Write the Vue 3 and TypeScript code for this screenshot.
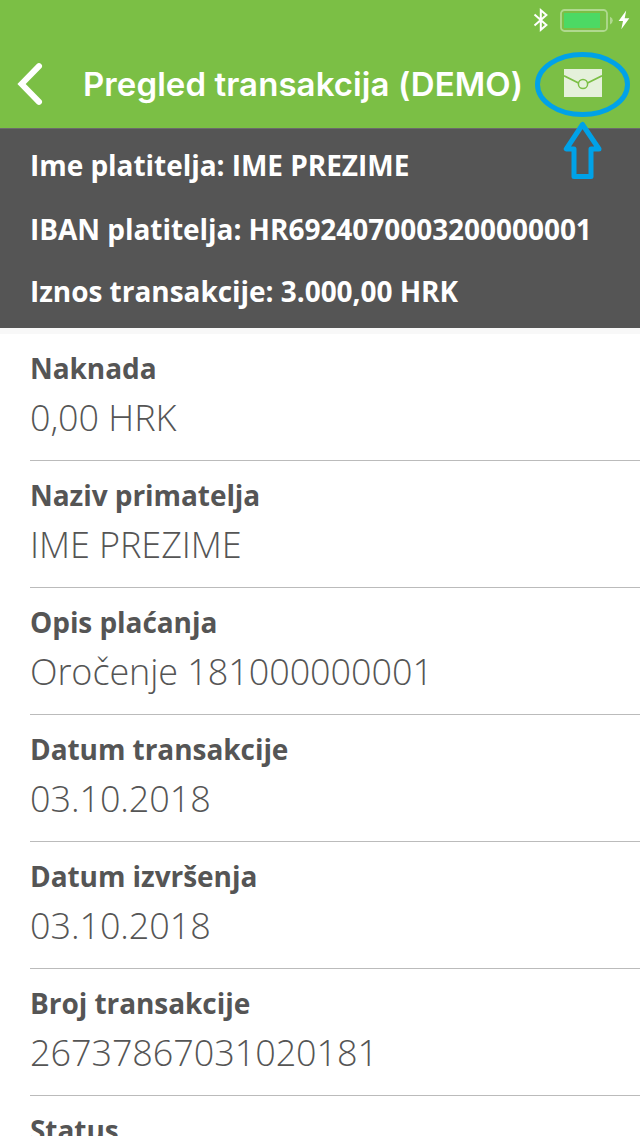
<script setup lang="ts">
interface Detail {
  label: string
  value: string
}

const summary: string[] = [
  'Ime platitelja: IME PREZIME',
  'IBAN platitelja: HR6924070003200000001',
  'Iznos transakcije: 3.000,00 HRK',
]

const details: Detail[] = [
  { label: 'Naknada', value: '0,00 HRK' },
  { label: 'Naziv primatelja', value: 'IME PREZIME' },
  { label: 'Opis plaćanja', value: 'Oročenje 181000000001' },
  { label: 'Datum transakcije', value: '03.10.2018' },
  { label: 'Datum izvršenja', value: '03.10.2018' },
  { label: 'Broj transakcije', value: '26737867031020181' },
  { label: 'Status', value: '' },
]
</script>

<template>
  <div class="screen">
    <header class="header">
      <div class="status-bar">
        <svg class="bluetooth" width="16" height="24" viewBox="0 0 16 24">
          <path d="M1.5 6.5 L13.4 17 L7.8 21.8 V2.2 L13.4 7 L1.5 17.5" fill="none" stroke="#fff" stroke-width="2" />
        </svg>
        <svg class="battery" width="54" height="24" viewBox="0 0 54 24">
          <rect x="1" y="1" width="46" height="21" rx="3.5" fill="none" stroke="#b0d98f" stroke-width="1.8" />
          <rect x="4" y="4" width="36" height="15" fill="#4cd964" />
          <path d="M50 7.8 Q52.8 9 52.8 11.6 Q52.8 14.2 50 15.4 Z" fill="#b0d98f" />
        </svg>
        <svg class="bolt" width="12" height="20" viewBox="0 0 12 20">
          <path d="M8.2 0.5 L0.6 11 H5 L3.3 19.3 L11.3 8.2 H6.7 Z" fill="#fff" />
        </svg>
      </div>
      <nav class="nav">
        <svg class="back" width="28" height="46" viewBox="0 0 28 46">
          <path d="M23 5.2 L5.6 23 L23 40.8" fill="none" stroke="#fff" stroke-width="6" stroke-linecap="round" stroke-linejoin="miter" />
        </svg>
        <h1 class="title">Pregled transakcija (DEMO)</h1>
        <svg class="mail" width="38" height="28" viewBox="0 0 38 28">
          <rect width="38" height="28" fill="#e5f1db" />
          <path d="M0 6.8 L14.5 14 M38 6.8 L23.5 14" stroke="#7bbf45" stroke-width="1.8" />
          <circle cx="19" cy="15" r="4.6" fill="#e5f1db" stroke="#7bbf45" stroke-width="1.5" />
        </svg>
      </nav>
    </header>

    <section class="summary">
      <p v-for="line in summary" :key="line" class="summary-line">{{ line }}</p>
    </section>

    <main class="details">
      <div v-for="item in details" :key="item.label" class="row">
        <div class="label">{{ item.label }}</div>
        <div class="value">{{ item.value }}</div>
      </div>
    </main>

    <svg class="marker" width="100" height="134" viewBox="0 0 100 134">
      <ellipse cx="52.5" cy="34.5" rx="45" ry="30" fill="none" stroke="#00a2e8" stroke-width="5" />
      <path d="M52.5 74.5 L36.3 99 H44 V126.5 H61 V99 H69 Z" fill="none" stroke="#00a2e8" stroke-width="5" stroke-linejoin="round" />
    </svg>
  </div>
</template>

<style>
body {
  margin: 0;
  background: #fff;
}
</style>

<style scoped>
.screen {
  position: relative;
  width: 640px;
  height: 1136px;
  overflow: hidden;
  background: #fff;
  font-family: "Open Sans", "Noto Sans", sans-serif;
}

.header {
  height: 128px;
  background: #7bbf45;
}

.status-bar {
  display: flex;
  align-items: flex-start;
  height: 40px;
  padding: 8px 9px 0 533px;
  box-sizing: border-box;
}

.bluetooth {
  flex: none;
}

.battery {
  flex: none;
  margin: 1px 0 0 11px;
}

.bolt {
  flex: none;
  margin: 2px 0 0 4px;
}

.nav {
  display: flex;
  align-items: center;
  height: 88px;
  padding-left: 16px;
}

.back {
  flex: none;
}

.title {
  width: 440px;
  margin: 0 0 0 39px;
  color: #fff;
  font-family: Inter, sans-serif;
  font-size: 33px;
  font-weight: 600;
  line-height: 40px;
  letter-spacing: 0.08px;
  white-space: nowrap;
}

.mail {
  flex: none;
  margin: -2px 0 0 41px;
}

.summary {
  box-sizing: border-box;
  height: 200px;
  padding: 17px 0 0 30px;
  border-top: 1px solid #6b6b6b;
  background: #555;
}

.summary-line {
  margin: 0 0 26px;
  color: #fff;
  font-size: 28px;
  font-weight: 700;
  line-height: 38px;
  letter-spacing: -0.04px;
  white-space: nowrap;
}

.summary-line:nth-child(2) {
  margin-bottom: 24px;
}

.details {
  padding-left: 30px;
  border-top: 6px solid #f8f8f8;
  color: #555;
}

.row {
  box-sizing: border-box;
  height: 127px;
  padding-top: 15px;
  border-bottom: 1px solid #bbb;
  white-space: nowrap;
}

.label {
  font-size: 28px;
  font-weight: 700;
  line-height: 38px;
  letter-spacing: -0.06px;
}

.value {
  margin-top: 6px;
  font-size: 36px;
  font-weight: 300;
  line-height: 49px;
  letter-spacing: -0.08px;
}

.marker {
  position: absolute;
  top: 50px;
  left: 530px;
}
</style>
